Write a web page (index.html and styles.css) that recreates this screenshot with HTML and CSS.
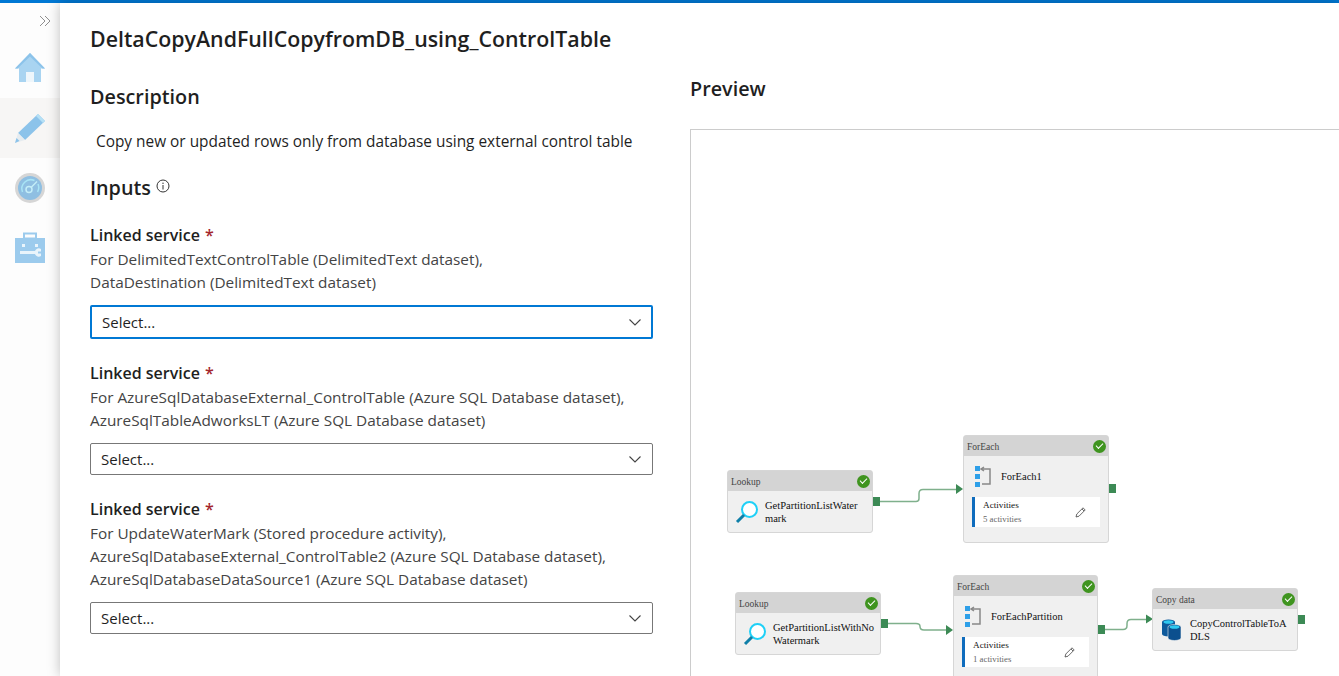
FILE: index.html
```html
<!DOCTYPE html>
<html lang="en">
<head>
    <meta charset="utf-8">
    <title>DeltaCopyAndFullCopyfromDB_using_ControlTable</title>
    <link rel="stylesheet" href="styles.css">
</head>
<body>

<div class="topbar"></div>

<div class="shell">
    <nav class="sidebar">
        <div class="collapse">
            <svg width="12" height="12" viewBox="0 0 12 12"><path d="M1 1l5 5-5 5M6 1l5 5-5 5" fill="none" stroke="#8f8f8f" stroke-width="1"/></svg>
        </div>
        <div class="nav-item">
            <svg width="32" height="32" viewBox="0 0 32 32">
                <path d="M16 1L1 16.500h4V30h22V16.500h4z" fill="#a9d4f1"/>
                <path d="M16 1L1 16.500h2.500L16 4.500l12.500 12H31z" fill="#8cc3ea"/>
                <rect x="12" y="20" width="8" height="10" fill="#eef6fb"/>
            </svg>
        </div>
        <div class="nav-item nav-item-active">
            <svg width="32" height="32" viewBox="0 0 32 32">
                <path d="M24 2l7 7L11 28l-7-7z" fill="#8cc3ea"/>
                <path d="M22 4l7 7 2-2-7-7z" fill="#b5e0f5"/>
                <path d="M4 21l7 7-10 3z" fill="#e6ecf0"/>
                <path d="M2.500 26l3 3-4.500 2z" fill="#8cc3ea"/>
            </svg>
        </div>
        <div class="nav-item">
            <svg width="32" height="32" viewBox="0 0 32 32">
                <circle cx="16" cy="16" r="15" fill="#d6d6d6"/>
                <circle cx="16" cy="16" r="12" fill="#8fbfe2"/>
                <path d="M8.500 20a9 9 0 0 1 12-11.500" fill="none" stroke="#a8e4f5" stroke-width="1.500"/>
                <path d="M24 12a9 9 0 0 1-.5 8" fill="none" stroke="#a8e4f5" stroke-width="1.500"/>
                <circle cx="15" cy="17.500" r="3" fill="none" stroke="#c4eef8" stroke-width="1.500"/>
                <path d="M17 15.500l6-6" stroke="#c4eef8" stroke-width="1.500"/>
            </svg>
        </div>
        <div class="nav-item">
            <svg width="32" height="32" viewBox="0 0 32 32">
                <rect x="10" y="1.500" width="12" height="5" fill="none" stroke="#9ccbed" stroke-width="2"/>
                <rect x="1" y="6" width="30" height="25" fill="#9ccbed"/>
                <rect x="8" y="12" width="3" height="3" fill="#e9f4fb"/>
                <rect x="21" y="12" width="3" height="3" fill="#e9f4fb"/>
                <path d="M6 19h15a4 4 0 0 1 6-2v2.500h-3v2h3V24a4 4 0 0 1-6-2H6z" fill="#e9f4fb"/>
            </svg>
        </div>
    </nav>

    <main class="content">
        <h1 class="page-title">DeltaCopyAndFullCopyfromDB_using_ControlTable</h1>

        <div class="columns">
            <section class="form-col">
                <h2 class="section-title">Description</h2>
                <p class="description">Copy new or updated rows only from database using external control table</p>

                <h2 class="section-title inputs-title">Inputs
                    <svg class="info-icon" width="14" height="14" viewBox="0 0 14 14">
                        <circle cx="7" cy="7" r="6" fill="none" stroke="#333" stroke-width="1"/>
                        <path d="M7 6v4.500" stroke="#333" stroke-width="1"/>
                        <circle cx="7" cy="4.200" r=".7" fill="#333"/>
                    </svg>
                </h2>

                <div class="field">
                    <div class="field-label">Linked service <span class="required">*</span></div>
                    <div class="field-help">For DelimitedTextControlTable (DelimitedText dataset),<br>DataDestination (DelimitedText dataset)</div>
                    <div class="select select-focus">
                        <span>Select...</span>
                        <svg width="12" height="7" viewBox="0 0 12 7"><path d="M.5.5L6 6 11.500.5" fill="none" stroke="#444" stroke-width="1.100"/></svg>
                    </div>
                </div>

                <div class="field">
                    <div class="field-label">Linked service <span class="required">*</span></div>
                    <div class="field-help">For AzureSqlDatabaseExternal_ControlTable (Azure SQL Database dataset),<br>AzureSqlTableAdworksLT (Azure SQL Database dataset)</div>
                    <div class="select">
                        <span>Select...</span>
                        <svg width="12" height="7" viewBox="0 0 12 7"><path d="M.5.5L6 6 11.500.5" fill="none" stroke="#444" stroke-width="1.100"/></svg>
                    </div>
                </div>

                <div class="field">
                    <div class="field-label">Linked service <span class="required">*</span></div>
                    <div class="field-help">For UpdateWaterMark (Stored procedure activity),<br>AzureSqlDatabaseExternal_ControlTable2 (Azure SQL Database dataset),<br>AzureSqlDatabaseDataSource1 (Azure SQL Database dataset)</div>
                    <div class="select">
                        <span>Select...</span>
                        <svg width="12" height="7" viewBox="0 0 12 7"><path d="M.5.5L6 6 11.500.5" fill="none" stroke="#444" stroke-width="1.100"/></svg>
                    </div>
                </div>
            </section>

            <section class="preview-col">
                <h2 class="section-title preview-title">Preview</h2>

                <div class="canvas">
                    <svg class="edges" width="649" height="546" viewBox="0 0 649 546">
                        <g fill="none" stroke="#7fb08c" stroke-width="1.500">
                            <path d="M189 371.500h36q3 0 3-3v-5q0-4 4-4h33"/>
                            <path d="M197 493.500h28q4 0 4 3 0 3.500 4 3.500h22"/>
                            <path d="M414 499.500h18q4 0 4-4v-2q0-4 4-4h15"/>
                        </g>
                        <g fill="#3c8a55">
                            <path d="M265 354l7 5-7 5z"/>
                            <path d="M255 495l7 5-7 5z"/>
                            <path d="M455 484.500l7 4.500-7 4.500z"/>
                        </g>
                    </svg>

                    <div class="node node-lookup-a">
                        <div class="node-head">Lookup <span class="node-ok"></span></div>
                        <div class="node-body">
                            <svg width="24" height="24" viewBox="0 0 24 24">
                                <circle cx="14.500" cy="9.500" r="7.500" fill="#fff" stroke="#1fd0f7" stroke-width="2"/>
                                <path d="M9 15L2 22" stroke="#0f7fa8" stroke-width="3"/>
                            </svg>
                            <div class="node-name">GetPartitionListWater<br>mark</div>
                        </div>
                        <span class="port"></span>
                    </div>

                    <div class="node node-foreach-a">
                        <div class="node-head">ForEach <span class="node-ok"></span></div>
                        <div class="node-body foreach-body">
                            <svg width="16" height="21" viewBox="0 0 16 21">
                                <rect x="0" y="0" width="5" height="5" fill="#2d9fe8"/>
                                <rect x="0" y="8" width="5" height="5" fill="#2d9fe8"/>
                                <rect x="0" y="16" width="5" height="5" fill="#2d9fe8"/>
                                <path d="M9 1L6 3l3 2M7 3h8v15H7" fill="none" stroke="#888" stroke-width="1.500"/>
                            </svg>
                            <div class="node-name">ForEach1</div>
                        </div>
                        <div class="activities">
                            <div>
                                <div class="activities-title">Activities</div>
                                <div class="activities-count">5 activities</div>
                            </div>
                            <svg width="11" height="11" viewBox="0 0 11 11"><path d="M1 10l.8-3L8 .8 10.200 3 4 9.200zM7 2l2 2" fill="#fff" stroke="#444" stroke-width=".8"/></svg>
                        </div>
                        <span class="port port-head"></span>
                    </div>

                    <div class="node node-lookup-b">
                        <div class="node-head">Lookup <span class="node-ok"></span></div>
                        <div class="node-body">
                            <svg width="24" height="24" viewBox="0 0 24 24">
                                <circle cx="14.500" cy="9.500" r="7.500" fill="#fff" stroke="#1fd0f7" stroke-width="2"/>
                                <path d="M9 15L2 22" stroke="#0f7fa8" stroke-width="3"/>
                            </svg>
                            <div class="node-name">GetPartitionListWithNo<br>Watermark</div>
                        </div>
                        <span class="port"></span>
                    </div>

                    <div class="node node-foreach-b">
                        <div class="node-head">ForEach <span class="node-ok"></span></div>
                        <div class="node-body foreach-body">
                            <svg width="16" height="21" viewBox="0 0 16 21">
                                <rect x="0" y="0" width="5" height="5" fill="#2d9fe8"/>
                                <rect x="0" y="8" width="5" height="5" fill="#2d9fe8"/>
                                <rect x="0" y="16" width="5" height="5" fill="#2d9fe8"/>
                                <path d="M9 1L6 3l3 2M7 3h8v15H7" fill="none" stroke="#888" stroke-width="1.500"/>
                            </svg>
                            <div class="node-name">ForEachPartition</div>
                        </div>
                        <div class="activities">
                            <div>
                                <div class="activities-title">Activities</div>
                                <div class="activities-count">1 activities</div>
                            </div>
                            <svg width="11" height="11" viewBox="0 0 11 11"><path d="M1 10l.8-3L8 .8 10.200 3 4 9.200zM7 2l2 2" fill="#fff" stroke="#444" stroke-width=".8"/></svg>
                        </div>
                        <span class="port port-foreach-b"></span>
                    </div>

                    <div class="node node-copy">
                        <div class="node-head">Copy data <span class="node-ok"></span></div>
                        <div class="node-body copy-body">
                            <svg width="20" height="22" viewBox="0 0 20 22">
                                <path d="M0 3a6.500 2.500 0 0 1 13 0v12a6.500 2.500 0 0 1-13 0z" fill="#0f5a9c"/>
                                <ellipse cx="6.500" cy="3" rx="5" ry="1.800" fill="#30c8f0"/>
                                <path d="M6 8a6.500 2.500 0 0 1 13 0v11a6.500 2.500 0 0 1-13 0z" fill="#0b4f8e" stroke="#f0f0f0" stroke-width=".6"/>
                                <ellipse cx="12.500" cy="8" rx="5" ry="1.800" fill="#30c8f0"/>
                            </svg>
                            <div class="node-name">CopyControlTableToA<br>DLS</div>
                        </div>
                        <span class="port"></span>
                    </div>
                </div>
            </section>
        </div>
    </main>
</div>

</body>
</html>
```

FILE: styles.css
```css
html, body {
    height: 100%;
}

body {
    margin: 0;
    overflow: hidden;
    background: #fff;
    color: #1f1f1f;
    font: normal 14px/23px "Open Sans", sans-serif;
}

.topbar {
    height: 3px;
    background: #0078d4;
}

.shell {
    display: flex;
    height: 673px;
}

/* left nav */
.sidebar {
    width: 60px;
    flex: none;
    background: #fdfdfd;
}

.collapse {
    display: flex;
    justify-content: flex-end;
    padding: 12px 9px 0 0;
    height: 23px;
}

.collapse svg {
    display: block;
}

.nav-item {
    display: flex;
    align-items: center;
    justify-content: center;
    height: 60px;
}

.nav-item-active {
    background: #f7f6f5;
}

/* main panel */
.content {
    flex: 1;
    min-width: 0;
    position: relative;
    background: #fff;
    box-shadow: 0 0 12px rgba(0, 0, 0, 0.25);
    padding: 0 0 0 30px;
}

.page-title {
    margin: 0;
    padding-top: 20px;
    font-size: 21.350px;
    line-height: 32px;
    font-weight: 600;
}

.columns {
    display: flex;
    gap: 37px;
    margin-top: 27px;
}

.form-col {
    width: 563px;
    flex: none;
}

.preview-col {
    flex: 1;
    min-width: 0;
}

.section-title {
    margin: 0;
    font-size: 19.800px;
    line-height: 30px;
    font-weight: 600;
}

.preview-title {
    margin-top: -8px;
}

.description {
    margin: 18px 0 0 6px;
    font-size: 15.400px;
}

.inputs-title {
    margin-top: 20px;
    display: flex;
    align-items: center;
    gap: 5px;
}

.info-icon {
    margin-bottom: 4px;
}

.field {
    margin-bottom: 22px;
}

.inputs-title + .field {
    margin-top: 20px;
}

.field-label {
    font-size: 16px;
    font-weight: 600;
    line-height: 24px;
}

.required {
    color: #a4262c;
    margin-left: 1px;
}

.field-help {
    color: #444;
    font-size: 15.350px;
    padding-top: 1px;
}

.select {
    display: flex;
    align-items: center;
    justify-content: space-between;
    box-sizing: border-box;
    height: 32px;
    margin-top: 11px;
    padding: 1px 11px 0 10px;
    border: 1px solid #777;
    border-radius: 2px;
    font-size: 15px;
}

.select-focus {
    height: 34px;
    border: 2px solid #0078d4;
    padding: 1px 10px 0;
}

/* pipeline preview */
.canvas {
    position: relative;
    height: 560px;
    margin-top: 25px;
    border: 1px solid #ccc;
    border-right: 0;
    background: #fff;
    font-family: "Liberation Serif", serif;
    color: #111;
}

.edges {
    position: absolute;
    left: 0;
    top: 0;
}

.node {
    position: absolute;
    box-sizing: border-box;
    width: 146px;
    background: #f0f0f0;
    border: 1px solid #d6d6d6;
    border-radius: 3px;
}

.node-lookup-a { left: 36px; top: 340px; height: 63px; }
.node-foreach-a { left: 272px; top: 305px; height: 108px; }
.node-lookup-b { left: 44px; top: 462px; height: 63px; }
.node-foreach-b { left: 262px; top: 445px; height: 130px; width: 145px; }
.node-copy { left: 461px; top: 458px; height: 63px; }

.node-head {
    display: flex;
    align-items: center;
    justify-content: space-between;
    box-sizing: border-box;
    height: 20px;
    padding: 2px 2px 0 3px;
    background: #d4d4d4;
    color: #444;
    font-size: 9.500px;
    line-height: 18px;
}

.node-ok {
    width: 13px;
    height: 13px;
    margin-top: -2px;
    border-radius: 50%;
    background: #3f941f;
    position: relative;
}

.node-ok::after {
    content: "";
    position: absolute;
    left: 3px;
    top: 3px;
    width: 6px;
    height: 3px;
    border-left: 1.500px solid #fff;
    border-bottom: 1.500px solid #fff;
    transform: rotate(-45deg);
}

.node-body {
    display: flex;
    align-items: center;
    gap: 6px;
    height: 41px;
    padding-left: 7px;
}

.node-name {
    font-size: 10.500px;
    line-height: 13px;
}

.foreach-body {
    gap: 10px;
    padding-left: 11px;
}

.copy-body {
    gap: 8px;
    padding-left: 9px;
}

.activities {
    display: flex;
    align-items: center;
    justify-content: space-between;
    box-sizing: border-box;
    height: 30px;
    margin: 0 8px;
    padding: 0 14px 0 8px;
    background: #fff;
    border-left: 3px solid #0f6cbd;
}

.activities-title {
    font-size: 9.200px;
    line-height: 14px;
}

.activities-count {
    color: #666;
    font-size: 8.800px;
    line-height: 14px;
}

.port {
    position: absolute;
    right: -8px;
    top: 26px;
    width: 7px;
    height: 9px;
    background: #3c8a55;
}

.port-head {
    top: 48px;
}

.port-foreach-b {
    top: 49px;
}
```
